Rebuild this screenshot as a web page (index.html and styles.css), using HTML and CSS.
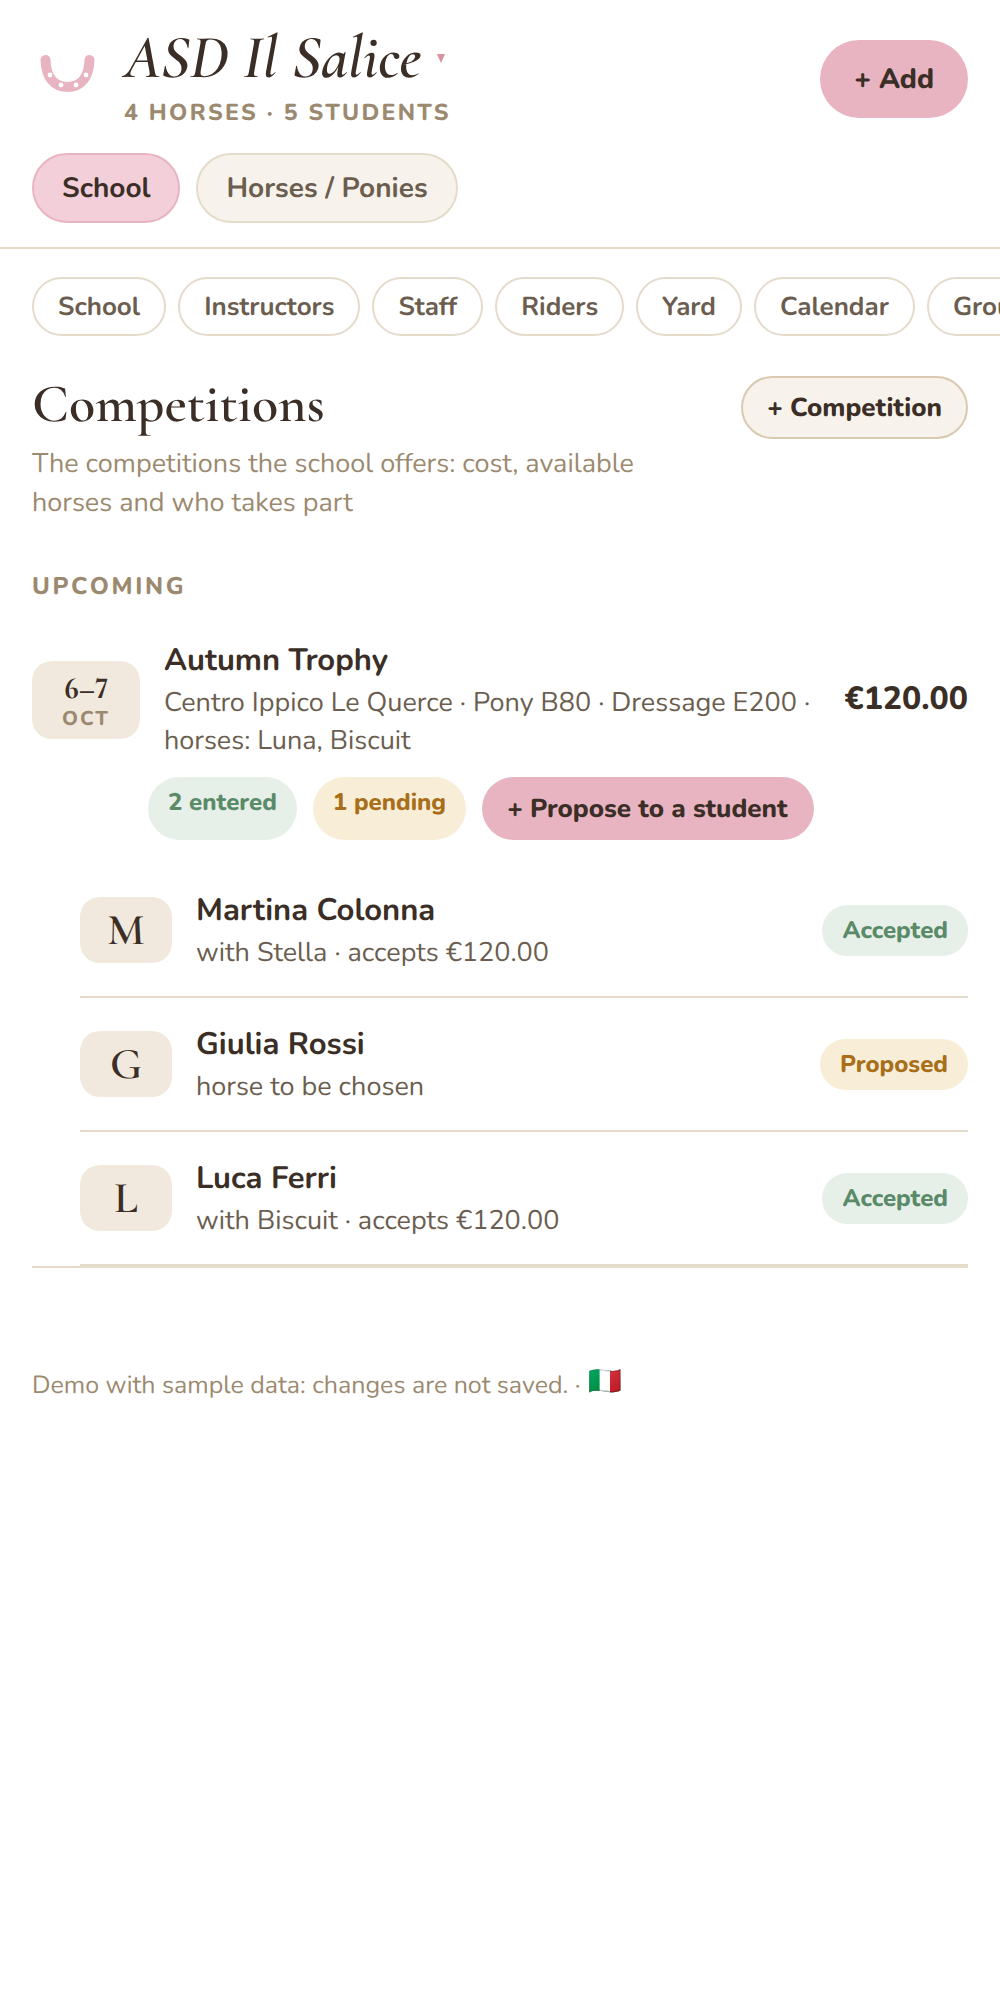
FILE: index.html
```html
<!DOCTYPE html>
<html>
  <head>
    <meta charset="UTF-8">
    <title>Competitions</title>
    <link rel="stylesheet" href="styles.css">
  </head>
  <body>
    <header class="top">
      <div class="top-row">
        <div class="brand">
          <svg class="logo" viewBox="0 0 56 40" width="56" height="40">
            <path d="M5.500 5 C6 22 14 32 27.500 32 C41 32 49 22 49.500 5" fill="none" stroke="#e8b4c2" stroke-width="10" stroke-linecap="round"/>
            <circle cx="10" cy="20" r="2.400" fill="#fff"/>
            <circle cx="21" cy="30" r="2.400" fill="#fff"/>
            <circle cx="36" cy="30" r="2.400" fill="#fff"/>
            <circle cx="46" cy="20" r="2.400" fill="#fff"/>
          </svg>
          <div>
            <h1 class="school-name">ASD Il Salice <span class="caret"></span></h1>
            <div class="school-count">4 HORSES · 5 STUDENTS</div>
          </div>
        </div>
        <button class="add-btn">+ Add</button>
      </div>
      <div class="tabs">
        <button class="tab active">School</button>
        <button class="tab">Horses / Ponies</button>
      </div>
    </header>

    <nav class="chips">
      <span class="chip">School</span>
      <span class="chip">Instructors</span>
      <span class="chip">Staff</span>
      <span class="chip">Riders</span>
      <span class="chip">Yard</span>
      <span class="chip">Calendar</span>
      <span class="chip">Groups</span>
    </nav>

    <main class="content">
      <div class="section-head">
        <div>
          <h2 class="section-title">Competitions</h2>
          <p class="section-text">The competitions the school offers: cost, available horses and who takes part</p>
        </div>
        <button class="new-btn">+ Competition</button>
      </div>

      <div class="label">UPCOMING</div>

      <section class="event">
        <div class="event-top">
          <div class="date">
            <div class="date-days">6–7</div>
            <div class="date-month">OCT</div>
          </div>
          <div class="event-info">
            <div class="event-name">Autumn Trophy</div>
            <div class="event-meta">Centro Ippico Le Querce · Pony B80 · Dressage E200 · horses: Luna, Biscuit</div>
          </div>
          <div class="price">€120.00</div>
        </div>
        <div class="event-actions">
          <span class="pill green">2 entered</span>
          <span class="pill amber">1 pending</span>
          <button class="propose">+ Propose to a student</button>
        </div>

        <div class="entries">
          <div class="entry">
            <div class="avatar">M</div>
            <div class="entry-info">
              <div class="entry-name">Martina Colonna</div>
              <div class="entry-meta">with Stella · accepts €120.00</div>
            </div>
            <span class="status green">Accepted</span>
          </div>
          <div class="entry">
            <div class="avatar">G</div>
            <div class="entry-info">
              <div class="entry-name">Giulia Rossi</div>
              <div class="entry-meta">horse to be chosen</div>
            </div>
            <span class="status amber">Proposed</span>
          </div>
          <div class="entry">
            <div class="avatar">L</div>
            <div class="entry-info">
              <div class="entry-name">Luca Ferri</div>
              <div class="entry-meta">with Biscuit · accepts €120.00</div>
            </div>
            <span class="status green">Accepted</span>
          </div>
        </div>
      </section>

      <footer class="demo">Demo with sample data: changes are not saved. · <span class="flag">🇮🇹</span></footer>
    </main>
  </body>
</html>
```

FILE: styles.css
```css
* {
  box-sizing: border-box;
}

html, body {
  margin: 0;
  background: #fff;
}

body {
  width: 1000px;
  overflow-x: hidden;
  font-family: "Nunito", "Noto Sans", sans-serif;
  color: #3a2e26;
  text-rendering: geometricPrecision;
}

button {
  font-family: inherit;
  text-rendering: inherit;
  cursor: pointer;
}

.top {
  padding: 24px 32px 24px;
  border-bottom: 2px solid #e5dbcb;
}

.top-row {
  display: flex;
  justify-content: space-between;
  align-items: flex-start;
}

.brand {
  display: flex;
  align-items: center;
  gap: 28px;
}

.logo {
  margin-left: 8px;
  margin-top: -4px;
}

.school-name {
  margin: 0;
  font-family: "Cormorant Garamond", "Liberation Serif", serif;
  font-style: italic;
  font-weight: 600;
  font-size: 61.500px;
  line-height: 68px;
}

.caret {
  display: inline-block;
  vertical-align: 14px;
  margin-left: 1px;
  border-left: 4.500px solid transparent;
  border-right: 4.500px solid transparent;
  border-top: 9px solid #d9919f;
}

.school-count {
  margin-top: 6px;
  font-size: 23px;
  line-height: 32px;
  font-weight: 800;
  letter-spacing: 2.300px;
  color: #9c8a70;
}

.add-btn {
  margin-top: 16px;
  padding: 0 34px;
  height: 78px;
  border: 0;
  border-radius: 39px;
  background: #e8b4c2;
  color: #3a2e26;
  font-size: 28px;
  font-weight: 800;
}

.tabs {
  display: flex;
  gap: 16px;
  margin-top: 23px;
}

.tab {
  height: 70px;
  padding: 0 28px;
  border: 2px solid #e5dbcb;
  border-radius: 35px;
  background: #f7f3ec;
  color: #6b5e50;
  font-size: 28px;
  font-weight: 700;
}

.tab.active {
  background: #f3cfda;
  border-color: #e8b4c2;
  color: #3a2e26;
}

.chips {
  display: flex;
  gap: 12px;
  padding: 28px 32px 0;
  white-space: nowrap;
  overflow: hidden;
}

.chip {
  padding: 2px 24px 0;
  line-height: 53px;
  border: 2px solid #e5dbcb;
  border-radius: 30px;
  color: #6b5e50;
  font-size: 26px;
  font-weight: 700;
}

.content {
  padding: 40px 32px 0;
}

.section-head {
  display: flex;
  justify-content: space-between;
  align-items: flex-start;
}

.section-title {
  margin: 0;
  font-family: "Cormorant Garamond", "Liberation Serif", serif;
  font-weight: 600;
  font-size: 54px;
  line-height: 58px;
}

.section-text {
  margin: 11px 0 0;
  width: 640px;
  font-size: 27px;
  line-height: 38.500px;
  color: #9c8a70;
}

.new-btn {
  height: 63px;
  padding: 2px 24px 0;
  border: 2px solid #d9c9b0;
  border-radius: 32px;
  background: #f7f3ec;
  color: #3a2e26;
  font-size: 26px;
  font-weight: 800;
}

.label {
  margin-top: 49px;
  font-size: 24px;
  line-height: 32px;
  font-weight: 800;
  letter-spacing: 2.700px;
  color: #9c8a70;
}

.event {
  margin-top: 36px;
  border-bottom: 2px solid #e5dbcb;
}

.event-top {
  display: flex;
  align-items: center;
  gap: 24px;
}

.date {
  flex: none;
  width: 108px;
  height: 78px;
  padding-top: 10px;
  border-radius: 20px;
  background: #f2e9de;
  text-align: center;
}

.date-days {
  font-family: "Cormorant Garamond", "Liberation Serif", serif;
  font-variant-numeric: lining-nums;
  font-weight: 700;
  font-size: 31px;
  line-height: 34px;
}

.date-month {
  margin-top: 4px;
  font-size: 20px;
  line-height: 22px;
  font-weight: 800;
  letter-spacing: 2px;
  color: #9c8a70;
}

.event-info {
  flex: 1;
}

.event-name, .entry-name {
  margin-bottom: 2px;
  font-size: 31px;
  line-height: 43px;
  font-weight: 700;
}

.event-meta, .entry-meta {
  font-size: 27px;
  line-height: 38px;
  color: #6b5e50;
}

.price {
  flex: none;
  font-size: 32px;
  font-weight: 800;
}

.event-actions {
  display: flex;
  gap: 16px;
  margin-top: 17px;
  margin-left: 116px;
}

.pill {
  height: 63px;
  padding: 10px 20px 0;
  border-radius: 32px;
  font-size: 24px;
  line-height: 32px;
  font-weight: 800;
}

.green {
  background: #e6efe8;
  color: #5a8a68;
}

.amber {
  background: #f8eed8;
  color: #a86f1a;
}

.propose {
  height: 63px;
  padding: 2px 26px 0 25px;
  border: 0;
  border-radius: 32px;
  background: #e8b4c2;
  color: #3a2e26;
  font-size: 26px;
  font-weight: 800;
}

.entries {
  margin-top: 24px;
  margin-left: 48px;
}

.entry {
  display: flex;
  align-items: center;
  gap: 24px;
  height: 134px;
  border-bottom: 2px solid #e5dbcb;
}

.avatar {
  flex: none;
  width: 92px;
  height: 66px;
  border-radius: 20px;
  background: #f2e9de;
  text-align: center;
  font-family: "Cormorant Garamond", "Liberation Serif", serif;
  font-weight: 600;
  font-size: 44px;
  line-height: 66px;
}

.entry-info {
  flex: 1;
}

.status {
  height: 51px;
  padding: 1px 20px 0;
  border-radius: 26px;
  font-size: 24px;
  line-height: 50px;
  font-weight: 800;
}

.demo {
  margin-top: 98px;
  font-size: 25px;
  line-height: 36px;
  color: #9c8a70;
}

.flag {
  position: relative;
  top: -3px;
  margin-left: 1px;
  font-family: "Noto Color Emoji", sans-serif;
  font-size: 27px;
}
```
